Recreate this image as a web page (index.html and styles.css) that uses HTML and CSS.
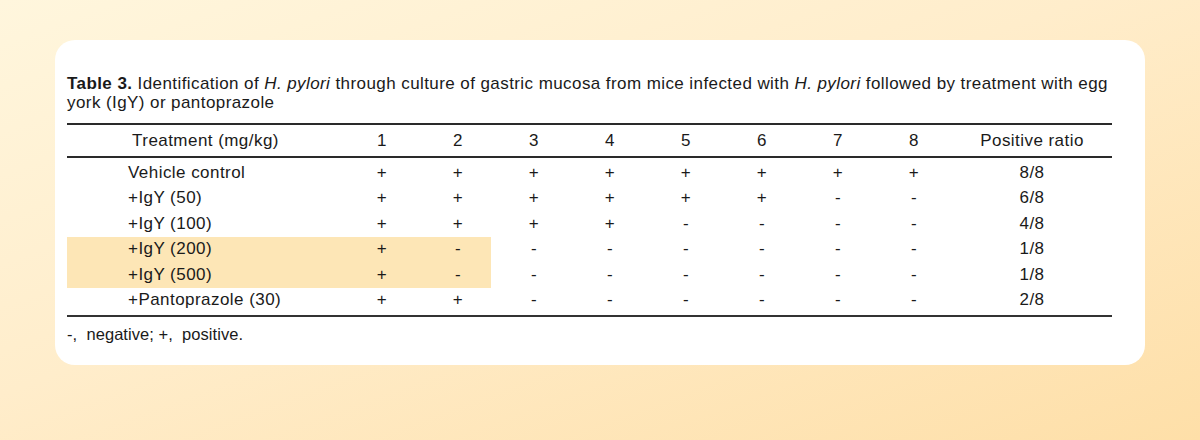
FILE: index.html
```html
<!DOCTYPE html>
<html lang="en">
<head>
<meta charset="utf-8">
<title>Table 3</title>
<link rel="stylesheet" href="styles.css">
</head>
<body>
<div class="card">
  <p class="caption"><b>Table 3.</b> Identification of <i>H. pylori</i> through culture of gastric mucosa from mice infected with <i>H. pylori</i> followed by treatment with egg york (IgY) or pantoprazole</p>
  <table class="data">
    <colgroup>
      <col class="c-treat"><col class="c-n"><col class="c-n"><col class="c-n"><col class="c-n"><col class="c-n"><col class="c-n"><col class="c-n"><col class="c-n"><col class="c-ratio">
    </colgroup>
    <thead>
      <tr><th class="treat-h">Treatment (mg/kg)</th><th>1</th><th>2</th><th>3</th><th>4</th><th>5</th><th>6</th><th>7</th><th>8</th><th>Positive ratio</th></tr>
    </thead>
    <tbody>
      <tr class="first"><td class="treat">Vehicle control</td><td>+</td><td>+</td><td>+</td><td>+</td><td>+</td><td>+</td><td>+</td><td>+</td><td>8/8</td></tr>
      <tr><td class="treat">+IgY (50)</td><td>+</td><td>+</td><td>+</td><td>+</td><td>+</td><td>+</td><td>-</td><td>-</td><td>6/8</td></tr>
      <tr><td class="treat">+IgY (100)</td><td>+</td><td>+</td><td>+</td><td>+</td><td>-</td><td>-</td><td>-</td><td>-</td><td>4/8</td></tr>
      <tr class="hl"><td class="treat">+IgY (200)</td><td>+</td><td class="hl-end">-</td><td>-</td><td>-</td><td>-</td><td>-</td><td>-</td><td>-</td><td>1/8</td></tr>
      <tr class="hl"><td class="treat">+IgY (500)</td><td>+</td><td class="hl-end">-</td><td>-</td><td>-</td><td>-</td><td>-</td><td>-</td><td>-</td><td>1/8</td></tr>
      <tr class="last"><td class="treat">+Pantoprazole (30)</td><td>+</td><td>+</td><td>-</td><td>-</td><td>-</td><td>-</td><td>-</td><td>-</td><td>2/8</td></tr>
    </tbody>
  </table>
  <p class="note">-,&nbsp; negative; +,&nbsp; positive.</p>
</div>
</body>
</html>
```

FILE: styles.css
```css
html, body {
  margin: 0;
  padding: 0;
}
body {
  width: 1200px;
  height: 440px;
  background: linear-gradient(160deg, #fff6dd 0%, #ffedcb 45%, #fedfa8 100%);
  font-family: "Liberation Sans", Arial, sans-serif;
  color: #1a1a1a;
  padding-top: 40px;
  box-sizing: border-box;
}
.card {
  margin-left: 55px;
  width: 1090px;
  height: 325px;
  background: #ffffff;
  border-radius: 20px;
  box-sizing: border-box;
  padding: 34px 0 0 12px;
}
.caption {
  margin: 0;
  width: 1055px;
  font-size: 17px;
  line-height: 19px;
  letter-spacing: 0.42px;
}
.caption b { font-weight: bold; }
.data {
  margin-top: 11px;
  border-collapse: collapse;
  table-layout: fixed;
  width: 1045px;
  font-size: 17px;
  letter-spacing: 0.45px;
}
.c-treat { width: 277px; }
.c-n { width: 76px; }
.c-ratio { width: 160px; }
.data th {
  font-weight: normal;
  text-align: center;
  height: 31px;
  padding: 0;
  border-top: 2px solid #2a2a2a;
  border-bottom: 2px solid #2a2a2a;
}
.data td {
  text-align: center;
  padding: 0;
  height: 25.5px;
}
.data tr.first td { padding-top: 2px; }
.data tr.last td { padding-bottom: 2px; }
.data tbody tr.last td { border-bottom: 2.5px solid #333; }
.data td.treat {
  text-align: left;
  padding-left: 61px;
}
.data tr.hl td:nth-child(-n+2) {
  background: #fde6b6;
}
.data tr.hl td.hl-end {
  background: linear-gradient(to right, #fde6b6 71px, transparent 71px);
}
.note {
  margin: 8px 0 0 0;
  font-size: 16.5px;
  letter-spacing: 0.05px;
}
```
